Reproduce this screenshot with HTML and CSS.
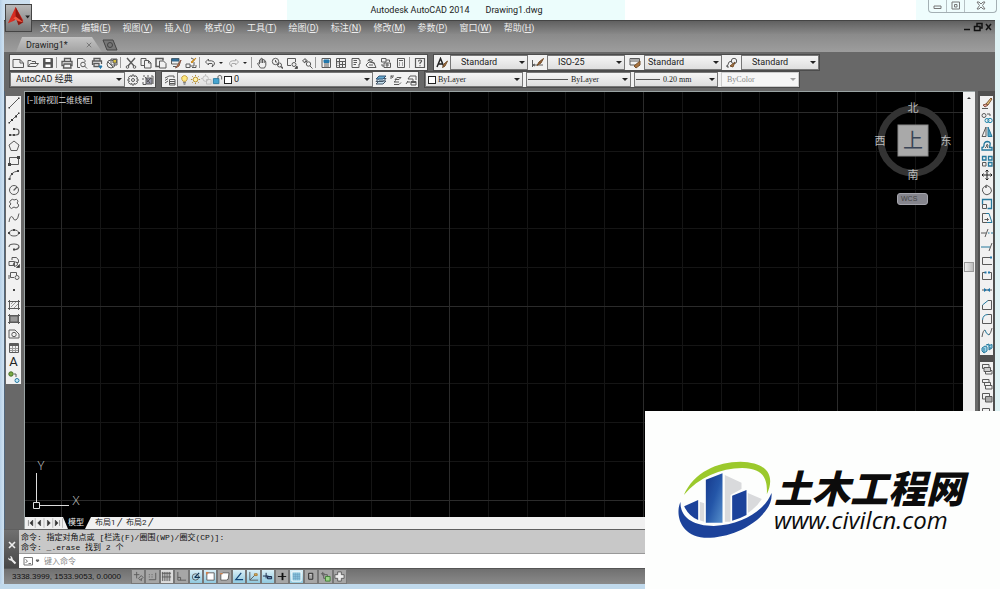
FILE: index.html
```html
<!DOCTYPE html>
<html lang="zh-CN">
<head>
<meta charset="utf-8">
<title>Autodesk AutoCAD 2014 - Drawing1.dwg</title>
<link rel="stylesheet" href="styles.css">
</head>
<body>
<svg class="defs" aria-hidden="true">
  <symbol id="new" viewBox="0 0 12 12"><path d="M1 2.500H8L11.500 6V10.500H1ZM8 2.500V6H11"/></symbol>
  <symbol id="open" viewBox="0 0 12 12"><path d="M1 9.500V3.500H4L5 4.500H8.500V6M1 9.500L3.500 6.500H11.500L9 9.500Z"/></symbol>
  <symbol id="save" viewBox="0 0 12 12"><path d="M1.500 1.500H10.500V10.500H1.500Z" fill="#555"/><path d="M3.500 2H8.500V5H3.500ZM3.500 7.500H8.500V10H3.500Z" fill="#fff" stroke="none"/></symbol>
  <symbol id="print" viewBox="0 0 12 12"><path d="M3.500 4V1.500H9.500V4M2.500 8.500H1V4.500H11V8.500H9.500M3 7H9.500L10 11H2.500Z" stroke-width="1.300"/></symbol>
  <symbol id="preview" viewBox="0 0 12 12"><path d="M4 10.500H1.500V1.500H7L9 3.500V5M8.500 9L11 11.500"/><circle cx="7" cy="7.500" r="2.300"/></symbol>
  <symbol id="publish" viewBox="0 0 12 12"><path d="M3 3.500V1.500H9V3.500M1.500 8V4H10.500V7M3 6.500H8V9.500H3Z" stroke-width="1.300"/><path d="M8 9H11L9.500 11.500Z" fill="#27a" stroke="#27a"/></symbol>
  <symbol id="print3d" viewBox="0 0 12 12"><circle cx="5" cy="7" r="4"/><path d="M5 2H11V8H5ZM2 5L7 10"/><path d="M7 2.500H10.500V6H7Z" fill="#d7bd39"/></symbol>
  <symbol id="cut" viewBox="0 0 12 12"><path d="M2 1L9 9M10 1L3 9" stroke-width="1.400"/><circle cx="2.500" cy="10" r="1.300"/><circle cx="9.500" cy="10" r="1.300"/></symbol>
  <symbol id="copy" viewBox="0 0 12 12"><path d="M4 8.500H1V1.500H6V3.500M4.500 3.500H8.500L11 6V11H4.500ZM8.500 3.500V6H11"/></symbol>
  <symbol id="paste" viewBox="0 0 12 12"><path d="M4 9.500H1V1.500H8V3.500M3 1.500H6.500" stroke-width="1.500"/><path d="M4.500 4H8.500L11 6.500V11H4.500Z"/></symbol>
  <symbol id="match" viewBox="0 0 12 12"><path d="M1.500 1.500H9V7H1.500ZM2 3.500H9M3 9.500H6"/><path d="M2 2H8.500V4H2Z" fill="#37a" stroke="#368"/><path d="M11 3L7 9L5.500 11L9 9Z" fill="#c48a48" stroke="#854"/></symbol>
  <symbol id="block" viewBox="0 0 12 12"><path d="M1 7H5V10.500H1ZM5 9H9V5M7 10.500H11V8M6 1L10 3"/><path d="M11 1L6 5L7 6Z" fill="#d79c28" stroke="#c88a22"/></symbol>
  <symbol id="undo" viewBox="0 0 12 12"><path d="M4.500 2L1.500 5L4.500 8V6.500H8Q9.500 7 8 10Q12 7 9.500 4.500Q8 3.500 4.500 3.800Z"/></symbol>
  <symbol id="pan" viewBox="0 0 12 12"><path d="M3.500 7V3Q4.500 1.500 5 3V1.500Q6 .500 6.500 2V3Q7.500 1 8.200 3V4Q9.500 3 9.800 5Q10.500 8.500 8.500 11H4.500Q3 9 1.500 6.500Q2 5 3.500 7M5 3V6M6.500 3V6M8.200 4V6"/></symbol>
  <symbol id="zoomrt" viewBox="0 0 12 12"><circle cx="4.500" cy="4.500" r="3.200"/><path d="M4.500 3V5H6M7 7L8 8"/><circle cx="8.500" cy="8" r="2"/><path d="M10 9.500L12 11.500" stroke-width="1.600"/></symbol>
  <symbol id="zoomwin" viewBox="0 0 12 12"><path d="M5 8.500H1.500V1.500H9.500V5M10 9L11.500 11" /><circle cx="8" cy="7.500" r="2"/><path d="M11 9L11.500 11.500H9Z" fill="#333"/></symbol>
  <symbol id="zoomprev" viewBox="0 0 12 12"><path d="M4 1.500L1.500 4L4 6V4.500H6V3H4ZM9 9L11.500 11.500"/><circle cx="7.500" cy="7" r="2.200"/></symbol>
  <symbol id="props" viewBox="0 0 12 12"><path d="M2 1.500H10.500V10.500H2ZM4 7H9M4 9H9"/><path d="M4 3H9V5.500H4Z" fill="#27a" stroke="#27a"/></symbol>
  <symbol id="center" viewBox="0 0 12 12"><path d="M1.500 1.500H10.500V10.500H1.500ZM1.500 4.500H10.500M4.500 1.500V10.500M7.500 4.500V10.500M4.500 7.500H10.500"/><path d="M2.500 6H3.500M2.500 8.500H3.500"/></symbol>
  <symbol id="sheet" viewBox="0 0 12 12"><path d="M2 1.500H9V3H10V7H9V10.500H2ZM3.500 3.500H7M3.500 5.500H7M3.500 7.500H6"/></symbol>
  <symbol id="markup" viewBox="0 0 12 12"><path d="M1 8L4 5L9 6L11 10.500H3ZM3 3L10 6.500M4 8H8M2.500 4L5 2L8 4"/></symbol>
  <symbol id="batch" viewBox="0 0 12 12"><path d="M1.500 1.500H6V5H1.500ZM6 3H9.500V5M4 6H10.500V10.500H4ZM2 7V9H4M5.500 8H9M7 6V10"/></symbol>
  <symbol id="calc" viewBox="0 0 12 12"><path d="M2.500 1.500H9.500V10.500H2.500ZM4 3.500H8M4 6H5M7 6H8M4 8H5M7 8H8"/></symbol>
  <symbol id="help" viewBox="0 0 12 12"><path d="M1.500 1.500H10.500V10.500H1.500ZM4.500 4.500Q4.500 3 6 3Q8 3 7.500 4.500L6 6V7M6 8.200V9.200" stroke-width="1.200"/></symbol>
  <symbol id="brushA" viewBox="0 0 12 12"><path d="M1 10L4.500 1.500L8 10M2 7H7" stroke="#222" stroke-width="1.500"/><path d="M11.500 4L9 9L6.500 10.500L8 7Z" fill="#a97440" stroke="#75502c"/></symbol>
  <symbol id="dim" viewBox="0 0 12 12"><path d="M.500 3V10M.500 8H11M1 8L3 7M1 8L3 9"/><path d="M11.500 1.500L9 6L5 8.500L7 5Z" fill="#98633d" stroke="#75502c"/></symbol>
  <symbol id="tblstyle" viewBox="0 0 12 12"><path d="M1 1.500H10.500V8H1ZM1 4H10"/><path d="M1.500 2H10V4H1.500Z" fill="#aaa" stroke="none"/><path d="M11 4V8L7 11L5 9Z" fill="#a97440" stroke="#75502c"/></symbol>
  <symbol id="leader" viewBox="0 0 12 12"><path d="M1 10L3 5L6 4M3 10L1 10V8"/><circle cx="8" cy="4" r="2.700"/><path d="M9 5L7 10L4 9Z" fill="#a97440" stroke="#75502c"/></symbol>
  <symbol id="gear" viewBox="0 0 12 12"><path d="M5 1H7V2.500L9 1.800L10.500 4L9.500 5H11V7H9.500L10.500 8.500L9 10.200L7 9.500V11H5V9.500L3 10.200L1.500 8.500L2.500 7H1V5H2.500L1.500 3.500L3 1.800L5 2.500Z"/><circle cx="6" cy="6" r="1.500"/></symbol>
  <symbol id="wsave" viewBox="0 0 12 12"><path d="M1 2H3M5 2H7M9 2H11V10M1 4V6M1 8V10.500H4"/><path d="M4 4H10V10H4Z" fill="#99a" /><path d="M3 3L8 9M5 8L9 4" stroke="#555"/></symbol>
  <symbol id="layers" viewBox="0 0 12 12"><path d="M1 4L5 2H10V4M1 6.500L4 4.500M1 9L4 7M5.500 5.500H11V11H5.500ZM6 7.500H11M6 9.500H11"/></symbol>
  <symbol id="bulb" viewBox="0 0 9 12"><path d="M3 8Q1 6 1.500 3.500Q4.500 0 7.500 3.500Q8 6 6 8Z" fill="#ffe87d" stroke="#bd963b"/><path d="M3 9.500H6M3.500 11H5.500"/></symbol>
  <symbol id="sun" viewBox="0 0 12 12"><circle cx="6" cy="6" r="2.500" fill="#fff3aa" stroke="#b98e28"/><path d="M6 1V2.500M6 9.500V11M1 6H2.500M9.500 6H11M2.500 2.500L3.500 3.500M8.500 8.500L9.500 9.500M9.500 2.500L8.500 3.500M2.500 9.500L3.500 8.500" stroke="#a8832e"/></symbol>
  <symbol id="freeze" viewBox="0 0 12 12"><g stroke="#bbb"><circle cx="5" cy="5" r="3"/><path d="M6 6H11V11H6ZM5 0V2M0 5H2"/></g></symbol>
  <symbol id="lock" viewBox="0 0 12 12"><path d="M1.500 5H7.500V10.500H1.500Z" fill="#45a4d0" stroke="#277aa0"/><path d="M6.500 5V2.500Q8.500 .500 10.500 2.500V6"/></symbol>
  <symbol id="stackblue" viewBox="0 0 12 12"><path d="M1 10L4 7H11L8 10ZM1 7.500L4 4.500H11L8 7.500Z" fill="#c5dfec" stroke="#456"/><path d="M1 5L4 2H11L8 5Z" fill="#64a9cf" stroke="#357"/></symbol>
  <symbol id="layprev" viewBox="0 0 12 12"><path d="M5 5.500L7 3.500H11L9 5.500ZM4 8L6 6.500M9 8H4M4 10.500H9L11 8.500M1 1.500L3 4M4 2H1V5"/></symbol>
  <symbol id="laystate" viewBox="0 0 12 12"><path d="M1 10L3 7M3 5H8V7M5 2H11V6M5 2L3 5M2 8H5M6 7.500H11V11H6Z"/><path d="M6 8H11" stroke-width="2"/></symbol>
  <symbol id="line" viewBox="0 0 12 12"><path d="M1 11L11 1"/><path d="M.500 10H2V11.500H.500ZM10 .500H11.500V2H10Z" fill="#333" stroke="none"/></symbol>
  <symbol id="xline" viewBox="0 0 12 12"><path d="M1 11L11 1"/><path d="M3 7H5V9H3ZM7 3.500H9V5.500H7ZM10 .500H11.500V2H10ZM.500 10H2V11.500H.500Z" fill="#333" stroke="none"/></symbol>
  <symbol id="pline" viewBox="0 0 12 12"><path d="M6 3H8Q11 3 11 6Q11 9 8 9H1.500" stroke-width="1.200"/><path d="M5 2H7V4H5ZM1 8H3V10H1ZM5 8H7V10H5Z" fill="#444" stroke="none"/></symbol>
  <symbol id="poly" viewBox="0 0 12 12"><path d="M6 1L11 5L9 10.500H3L1 5Z"/></symbol>
  <symbol id="rect" viewBox="0 0 12 12"><path d="M1.500 2.500H10.500V9.500H1.500Z" /><path d="M0 8H3V11H0ZM9 1H12V4H9Z" fill="#444" stroke="none"/></symbol>
  <symbol id="arc" viewBox="0 0 12 12"><path d="M1.500 11Q2 3 10 2"/><path d="M.500 9H2.500V11H.500ZM3 4H5V6H3ZM9 1H11V3H9Z" fill="#444" stroke="none"/></symbol>
  <symbol id="circle" viewBox="0 0 12 12"><circle cx="6" cy="6" r="4.500"/><path d="M6 6L9 3M5.500 6H6.500" stroke-width="1.300"/></symbol>
  <symbol id="cloud" viewBox="0 0 12 12"><path d="M3 2Q5 .500 6 2Q9 0 10 3Q10 4 9 5Q12 7 10 9Q8 11 6 9Q3 12 1.500 9Q1 7 3 6Q0 4 3 2Z"/></symbol>
  <symbol id="spline" viewBox="0 0 12 12"><path d="M1 10Q2 3 4.500 5Q6 9 8 8Q10 7 11 1.500"/></symbol>
  <symbol id="ellipse" viewBox="0 0 12 12"><ellipse cx="6" cy="6" rx="4.500" ry="3"/><path d="M0 5H2V7H0ZM10 5H12V7H10ZM5 2H7V4H5Z" fill="#444" stroke="none"/></symbol>
  <symbol id="earc" viewBox="0 0 12 12"><path d="M1 6Q1 3 6 3Q11 3 11 6Q10 9 6 8.500" stroke-width="1.200"/><path d="M5 7.500H7V9.500H5Z" fill="#444" stroke="none"/></symbol>
  <symbol id="insblock" viewBox="0 0 12 12"><path d="M4 4V1.500H8.500L10.500 4V6.500H8M1 5.500H6.500V9.500H1ZM5 8L7 11"/><circle cx="7.500" cy="8" r="2"/><path d="M11.500 8.500V11.500H8.500Z" fill="#333"/></symbol>
  <symbol id="mkblock" viewBox="0 0 12 12"><path d="M2.500 2.500H8.500V5M2.500 2.500V7.500H6M1 5V9"/><circle cx="9" cy="7.500" r="2"/></symbol>
  <symbol id="point" viewBox="0 0 12 12"><path d="M5 5H7V7H5Z" fill="#444" stroke="none"/></symbol>
  <symbol id="hatch" viewBox="0 0 12 12"><path d="M1.500 1V11M10.500 1V11M0 2.500H12M0 9.500H12" /><path d="M3 8L8 3M3 5L5 3M6 9L10 5" stroke="#999"/></symbol>
  <symbol id="grad" viewBox="0 0 12 12"><path d="M2 3H10V9H2Z" fill="#999"/><path d="M1.500 1V11M10.500 1V11M0 2.500H12M0 9.500H12"/></symbol>
  <symbol id="region" viewBox="0 0 12 12"><path d="M1 2H7L11 6V10H1Z"/><circle cx="6" cy="6.500" r="2.200"/></symbol>
  <symbol id="table" viewBox="0 0 12 12"><path d="M1.500 1.500H10.500V10.500H1.500Z"/><path d="M2 6.500H10M4.500 4V10M7.500 4V10M2 8.500H10" stroke="#999"/><path d="M1 3H11" stroke-width="2"/></symbol>
  <symbol id="addsel" viewBox="0 0 12 12"><circle cx="3" cy="3" r="2.200" fill="#7cab45" stroke="#476f29"/><circle cx="9" cy="9.500" r="2" fill="#c4e6f5" stroke="#257ba3"/><path d="M6 3H8V6"/></symbol>
  <symbol id="erase" viewBox="0 0 12 12"><path d="M5 7L10 1L11 2L7 8Z" fill="#e7c477" stroke="#7b5535"/><path d="M2 8L5 7L7 8L4 10Z" fill="#e6a8a0" stroke="#86543e"/><path d="M1 11.500H7"/></symbol>
  <symbol id="copyobj" viewBox="0 0 12 12"><circle cx="3" cy="3.500" r="2"/><path d="M6 2H9V4"/><g stroke="#2386aa"><circle cx="6" cy="8.500" r="2"/><circle cx="9" cy="8.500" r="2.200"/></g></symbol>
  <symbol id="mirror" viewBox="0 0 12 12"><path d="M5 1V10.500H1Z"/><path d="M7 1V10.500H11Z" fill="#56aac9" stroke="#24789c"/></symbol>
  <symbol id="offset" viewBox="0 0 12 12"><path d="M1 10V7.500Q3 7.500 3 5Q3 1.500 6.500 1.500Q10 2 9 5L8.500 7.500H11V10Z" stroke="#24789c" stroke-width="1.300"/><path d="M4 8Q6 7 5.500 5Q6 3.500 7 5L6.500 8"/></symbol>
  <symbol id="array" viewBox="0 0 12 12"><g stroke="#24789c" stroke-width="1.300"><path d="M1.500 1.500H5V5H1.500ZM7.500 1.500H11V5H7.500ZM7.500 7.500H11V11H7.500Z"/></g><path d="M1.500 7.500H5V11H1.500Z"/></symbol>
  <symbol id="move" viewBox="0 0 12 12"><path d="M6 1V11M1 6H11M4.500 2.500L6 1L7.500 2.500M4.500 9.500L6 11L7.500 9.500M2.500 4.500L1 6L2.500 7.500M9.500 4.500L11 6L9.500 7.500" stroke="#222"/></symbol>
  <symbol id="rotate" viewBox="0 0 12 12"><path d="M5 2Q1 3 1.500 7Q3 11 6 10.800Q10 10 10.500 7Q10.500 3 7 2L5 1V4Z"/></symbol>
  <symbol id="scale" viewBox="0 0 12 12"><path d="M1.500 6.500V1.500H10.500V10.500H6.500" stroke="#24789c" stroke-width="1.300"/><path d="M1.500 6.500H5.500V10.500H1.500Z"/></symbol>
  <symbol id="stretch" viewBox="0 0 12 12"><path d="M6 1.500H1.500V10.500H6"/><path d="M5 1.500H8L11 10.500H6" stroke="#24789c"/><path d="M3.500 7.500H7.500M6 6L7.500 7.500L6 9"/></symbol>
  <symbol id="trim" viewBox="0 0 12 12"><path d="M0 6H5M4 10L7 2"/><path d="M7 6H8.500M10 6H12" stroke="#24789c"/></symbol>
  <symbol id="extend" viewBox="0 0 12 12"><path d="M8 10L11 2"/><path d="M0 6H9" stroke="#24789c"/></symbol>
  <symbol id="brkpt" viewBox="0 0 12 12"><path d="M1.500 2.500H10M1.500 2.500V9.500H11"/><path d="M9 1.500H11V3.500H9Z" fill="#27a" stroke="none"/></symbol>
  <symbol id="brk" viewBox="0 0 12 12"><path d="M4 2.500H1.500V9.500H10.500V2.500H8"/><path d="M3.500 1.500H5.500V3.500H3.500ZM7 1.500H9V3.500H7Z" fill="#27a" stroke="none"/></symbol>
  <symbol id="join" viewBox="0 0 12 12"><path d="M1 6H11"/><path d="M3 4L6 6L3 8ZM9 4L6 6L9 8Z" fill="#27a" stroke="none"/></symbol>
  <symbol id="chamfer" viewBox="0 0 12 12"><path d="M1.500 6V10.500H10.500V1.500H7"/><path d="M1.500 6L7 1.500" stroke="#24789c"/></symbol>
  <symbol id="fillet" viewBox="0 0 12 12"><path d="M1.500 7V10.500H10.500V1.500H7"/><path d="M1.500 7Q2 1.500 7 1.500" stroke="#24789c"/></symbol>
  <symbol id="blend" viewBox="0 0 12 12"><path d="M1 10Q2 3 4 3M8 8Q10 6 11 1"/><path d="M4 3Q5 7 8 8" stroke="#24789c"/></symbol>
  <symbol id="explode" viewBox="0 0 12 12"><path d="M1 6L4 4L6 5V9L3 11L1 9ZM5 3L8 2V5M8 3.500L11 2.500V6L8 8V5" fill="#9bd2e8" stroke="#24789c"/><path d="M3 6V10M9 5V7" stroke="#24789c"/></symbol>
  <symbol id="order1" viewBox="0 0 12 12"><path d="M1.500 1.500H8V5.500H1.500ZM4.500 7.500H11V11H4.500Z"/><path d="M3 4.500H9.500V8.500H3Z" fill="#ccc"/></symbol>
  <symbol id="order2" viewBox="0 0 12 12"><path d="M1.500 1.500H8V4.500H1.500ZM4.500 7.500H11V11H4.500ZM3.500 4.500V7.500H9.500V4.500H8"/></symbol>
  <symbol id="order3" viewBox="0 0 12 12"><path d="M1.500 1.500H8.500V7H1.500Z"/><path d="M4.500 4.500H11V10H4.500Z" fill="#aaa"/></symbol>
  <symbol id="infer" viewBox="0 0 12 12"><path d="M4 1V8M1 4H7M6 8L9 5L11 7L8 10ZM9 8V11"/></symbol>
  <symbol id="snap" viewBox="0 0 12 12"><path d="M2 9.500H9.500V2M2 4H3M5 4H6M2 6.500H3M5 6.500H6"/></symbol>
  <symbol id="grid" viewBox="0 0 12 12"><path d="M1.500 1V11M3.500 1V11M5.500 1V11M7.500 1V11M9.500 1V11M1 2.500H11M1 6.500H11"/></symbol>
  <symbol id="ortho" viewBox="0 0 12 12"><path d="M2 1V10H11M2 7H5V10"/></symbol>
  <symbol id="polar" viewBox="0 0 12 12"><circle cx="6" cy="6.500" r="3.500"/><path d="M5 7L10 2M5 7H11" stroke="#135" stroke-width="1.300"/></symbol>
  <symbol id="osnap" viewBox="0 0 12 12"><path d="M2 2H10V10H2Z" fill="#fff"/><path d="M2 1V4M1 2H4" stroke="#e27932"/></symbol>
  <symbol id="osnap3" viewBox="0 0 12 12"><path d="M2 4L4 2H11L10 9L8 10H2Z" fill="#fff"/><path d="M1 3H4" stroke="#e27932"/></symbol>
  <symbol id="otrack" viewBox="0 0 12 12"><path d="M9 2L3 9.500H11" stroke="#147" stroke-width="1.300"/></symbol>
  <symbol id="ducs" viewBox="0 0 12 12"><path d="M2 1V10H11M2 10L8 4"/><path d="M7 3H10V5H7Z" fill="#e0b75f" stroke="#a37a38"/></symbol>
  <symbol id="dyn" viewBox="0 0 12 12"><path d="M4.500 2V8M1 5.500H7" stroke="#124"/><path d="M6 6H10.500V8.500H6Z" fill="#68a" stroke="#124"/></symbol>
  <symbol id="lwt" viewBox="0 0 12 12"><path d="M1 6H10" stroke="#111"/><path d="M6 2V10" stroke="#111" stroke-width="2"/></symbol>
  <symbol id="tpy" viewBox="0 0 12 12"><path d="M1 1H11V11H1Z" fill="#8ec9e0" stroke="#fff"/><path d="M3 2V10M5 2V10M7 2V10M9 2V10M2 4H10M2 6H10M2 8H10" stroke="#6296b8" stroke-width=".500"/></symbol>
  <symbol id="qp" viewBox="0 0 12 12"><path d="M4 2.500H8.500V9H4Z" stroke="#222"/><path d="M5 4H7" stroke="#ddd"/></symbol>
  <symbol id="sc" viewBox="0 0 12 12"><path d="M3 1V5M1 3H5M4 4H8V8H4Z"/><path d="M6 6H11V11H6Z" fill="#9bd487" stroke="#3f7e34"/></symbol>
  <symbol id="am" viewBox="0 0 12 12"><path d="M4 1H8V4H11V8H8V11H4V8H1V4H4Z" fill="#eee"/></symbol>
</svg>

<div class="app">
  <button class="appmenu" aria-label="应用程序菜单">
    <svg viewBox="0 0 26 27"><path d="M10 2L2 19L9 16L12 10L15 18L18 16Z" fill="#d52c21"/><path d="M10 2L18 18L13 21L10 13Z" fill="#8f1710"/><path d="M2 19L10 12L18 18L13 17L8 14Z" fill="#ef5a42"/><path d="M20 11H25L22.500 14Z" fill="#222"/></svg>
  </button>
  <header class="title">
    <h1>Autodesk AutoCAD 2014<span>Drawing1.dwg</span></h1>
    <div class="winbtns">
      <button aria-label="最小化"><svg viewBox="0 0 12 12"><path d="M2 6H9V8.500H2Z"/></svg></button>
      <button aria-label="最大化"><svg viewBox="0 0 12 12"><path d="M2 2H9.500V9H2ZM4.500 4.500H7V7H4.500Z"/></svg></button>
      <button class="wide" aria-label="关闭"><svg viewBox="0 0 12 12"><path d="M2 2H4L6 4L8 2H10L7.500 5.500L10 9H8L6 7L4 9H2L4.500 5.500Z"/></svg></button>
    </div>
  </header>
  <nav class="menu">
    <a href="#">文件(<u>F</u>)</a><a href="#">编辑(<u>E</u>)</a><a href="#">视图(<u>V</u>)</a><a href="#">插入(<u>I</u>)</a><a href="#">格式(<u>O</u>)</a><a href="#">工具(<u>T</u>)</a><a href="#">绘图(<u>D</u>)</a><a href="#">标注(<u>N</u>)</a><a href="#">修改(<u>M</u>)</a><a href="#">参数(<u>P</u>)</a><a href="#">窗口(<u>W</u>)</a><a href="#">帮助(<u>H</u>)</a>
    <svg class="docbtns" viewBox="0 0 30 12"><path d="M1 8.500H7M11.500 5.500H17V9.500H11.500ZM14 5V2.500H19V7H17M23 3L28 9M28 3L23 9"/></svg>
  </nav>
  <div class="filetabs">
    <div class="filetab"><a href="#">Drawing1*</a><button aria-label="关闭图形"><svg viewBox="0 0 8 8"><path d="M1 1L7 7M7 1L1 7"/></svg></button></div>
    <button class="newtab" aria-label="新图形"><svg viewBox="0 0 16 12"><path d="M1 1H11L15 11H5Z" fill="#777" stroke="#444"/><circle cx="8" cy="6" r="2.500" stroke="#444"/></svg></button>
  </div>

  <div class="bars">
    <div class="bar">
      <div class="panel">
        <button class="t" aria-label="新建"><svg><use href="#new"/></svg></button><button class="t" aria-label="打开"><svg><use href="#open"/></svg></button><button class="t" aria-label="保存"><svg><use href="#save"/></svg></button><i></i><button class="t" aria-label="打印"><svg><use href="#print"/></svg></button><button class="t" aria-label="打印预览"><svg><use href="#preview"/></svg></button><button class="t" aria-label="发布"><svg><use href="#publish"/></svg></button><button class="t" aria-label="三维打印"><svg><use href="#print3d"/></svg></button><i></i><button class="t" aria-label="剪切"><svg><use href="#cut"/></svg></button><button class="t" aria-label="复制"><svg><use href="#copy"/></svg></button><button class="t" aria-label="粘贴"><svg><use href="#paste"/></svg></button><button class="t" aria-label="特性匹配"><svg><use href="#match"/></svg></button><button class="t" aria-label="块编辑器"><svg><use href="#block"/></svg></button><i></i><button class="t" aria-label="放弃"><svg><use href="#undo"/></svg></button><button class="drop" aria-label="放弃列表"></button><button class="t redo" aria-label="重做"><svg><use href="#undo"/></svg></button><button class="drop" aria-label="重做列表"></button><i></i><button class="t" aria-label="平移"><svg><use href="#pan"/></svg></button><button class="t" aria-label="实时缩放"><svg><use href="#zoomrt"/></svg></button><button class="t" aria-label="窗口缩放"><svg><use href="#zoomwin"/></svg></button><button class="t" aria-label="缩放上一个"><svg><use href="#zoomprev"/></svg></button><i></i><button class="t" aria-label="特性"><svg><use href="#props"/></svg></button><button class="t" aria-label="设计中心"><svg><use href="#center"/></svg></button><button class="t" aria-label="工具选项板"><svg><use href="#sheet"/></svg></button><button class="t" aria-label="图纸集"><svg><use href="#markup"/></svg></button><button class="t" aria-label="标记集"><svg><use href="#batch"/></svg></button><button class="t" aria-label="计算器"><svg><use href="#calc"/></svg></button><i></i><button class="t" aria-label="帮助"><svg><use href="#help"/></svg></button>
      </div>
      <div class="panel styles">
        <button class="t" aria-label="文字样式"><svg><use href="#brushA"/></svg></button>
        <div class="pick in"><select aria-label="文字样式列表"><option>Standard</option></select></div>
        <button class="t" aria-label="标注样式"><svg><use href="#dim"/></svg></button>
        <div class="pick in"><select aria-label="标注样式列表"><option>ISO-25</option></select></div>
        <button class="t" aria-label="表格样式"><svg><use href="#tblstyle"/></svg></button>
        <div class="pick"><select aria-label="表格样式列表"><option>Standard</option></select></div>
        <button class="t" aria-label="多重引线样式"><svg><use href="#leader"/></svg></button>
        <div class="pick in"><select aria-label="多重引线样式列表"><option>Standard</option></select></div>
      </div>
    </div>
    <div class="bar">
      <div class="panel">
        <div class="pick ws"><select aria-label="工作空间"><option>AutoCAD 经典</option></select></div>
        <button class="t" aria-label="工作空间设置"><svg><use href="#gear"/></svg></button><button class="t" aria-label="我的工作空间"><svg><use href="#wsave"/></svg></button>
      </div>
      <div class="panel">
        <button class="t" aria-label="图层特性"><svg><use href="#layers"/></svg></button>
        <div class="pick layer"><svg><use href="#bulb"/></svg><svg><use href="#sun"/></svg><svg><use href="#freeze"/></svg><svg><use href="#lock"/></svg><b class="swatch"></b><select aria-label="图层"><option>0</option></select></div>
        <button class="t" aria-label="置为当前"><svg><use href="#stackblue"/></svg></button><button class="t" aria-label="上一个图层"><svg><use href="#layprev"/></svg></button><button class="t" aria-label="图层状态"><svg><use href="#laystate"/></svg></button>
      </div>
      <div class="panel props">
        <div class="pick c1"><b class="swatch"></b><select aria-label="颜色"><option>ByLayer</option></select></div>
        <div class="pick c2"><b class="rule"></b><select aria-label="线型"><option>ByLayer</option></select></div>
        <div class="pick c3"><b class="rule short"></b><select aria-label="线宽"><option>0.20 mm</option></select></div>
        <div class="pick c4"><select aria-label="打印样式" disabled><option>ByColor</option></select></div>
      </div>
    </div>
  </div>

  <main class="work">
    <aside class="side left">
      <div class="tools draw">
        <button class="t" aria-label="直线"><svg><use href="#line"/></svg></button><button class="t" aria-label="构造线"><svg><use href="#xline"/></svg></button><button class="t" aria-label="多段线"><svg><use href="#pline"/></svg></button><button class="t" aria-label="多边形"><svg><use href="#poly"/></svg></button><button class="t" aria-label="矩形"><svg><use href="#rect"/></svg></button><button class="t" aria-label="圆弧"><svg><use href="#arc"/></svg></button><button class="t" aria-label="圆"><svg><use href="#circle"/></svg></button><button class="t" aria-label="修订云线"><svg><use href="#cloud"/></svg></button><button class="t" aria-label="样条曲线"><svg><use href="#spline"/></svg></button><button class="t" aria-label="椭圆"><svg><use href="#ellipse"/></svg></button><button class="t" aria-label="椭圆弧"><svg><use href="#earc"/></svg></button><button class="t" aria-label="插入块"><svg><use href="#insblock"/></svg></button><button class="t" aria-label="创建块"><svg><use href="#mkblock"/></svg></button><button class="t" aria-label="点"><svg><use href="#point"/></svg></button><button class="t" aria-label="图案填充"><svg><use href="#hatch"/></svg></button><button class="t" aria-label="渐变色"><svg><use href="#grad"/></svg></button><button class="t" aria-label="面域"><svg><use href="#region"/></svg></button><button class="t" aria-label="表格"><svg><use href="#table"/></svg></button><button class="t mtext" aria-label="多行文字">A</button><button class="t" aria-label="添加选定对象"><svg><use href="#addsel"/></svg></button>
      </div>
    </aside>
    <section class="drawing">
      <div class="viewrow">
        <div class="canvas">
          <svg class="gridlines" aria-hidden="true">
            <defs><pattern id="gp" x="36" y="20" width="194" height="194" patternUnits="userSpaceOnUse"><path d="M39.500 0V194M78.500 0V194M116.500 0V194M155.500 0V194M0 39.500H194M0 77.500H194M0 116.500H194M0 155.500H194" stroke="#151515"/><path d="M.500 0V194M0 .500H194" stroke="#2b2b2b"/></pattern></defs>
            <rect width="100%" height="100%" fill="url(#gp)"/>
          </svg>
          <p class="vplabel">[−][俯视][二维线框]</p>
          <svg class="cube" viewBox="0 0 80 84">
            <circle cx="40" cy="42" r="32" fill="none" stroke="#333" stroke-width="7"/>
            <rect x="25" y="26" width="30" height="31" fill="#a9a9a9" stroke="#8a8a8a"/>
            <text x="40" y="49" font-size="20" fill="#394456">上</text>
            <g font-size="11" fill="#bcbcbc"><text x="40" y="13">北</text><text x="40" y="80">南</text><text x="7" y="46">西</text><text x="73" y="46">东</text></g>
          </svg>
          <button class="wcs">WCS</button>
          <svg class="ucs" viewBox="0 0 52 60"><path d="M4.500 49V20M7 52.500H37M1.500 49.500H7.500V55.500H1.500Z" fill="none" stroke="#ddd"/><text x="9" y="17">Y</text><text x="44" y="52">X</text></svg>
        </div>
        <div class="vscroll"><b></b><i></i></div>
      </div>
      <div class="layouts">
        <svg class="pager" viewBox="0 0 39 12"><path d="M3.500 3V9M8 3L5 6L8 9ZM16 3L13 6L16 9ZM23 3L26 6L23 9ZM31 3L34 6L31 9ZM35.500 3V9" fill="#333" stroke="#333" stroke-width=".500"/><path d="M10.500 1V11M19.500 1V11M28.500 1V11M38.500 1V11" stroke="#bbb"/></svg>
        <a href="#" class="on">模型</a><a href="#">布局1</a><em>/</em><a href="#">布局2</a><em>/</em>
      </div>
    </section>
    <aside class="side right">
      <div class="tools modify">
        <button class="t" aria-label="删除"><svg><use href="#erase"/></svg></button><button class="t" aria-label="复制对象"><svg><use href="#copyobj"/></svg></button><button class="t" aria-label="镜像"><svg><use href="#mirror"/></svg></button><button class="t" aria-label="偏移"><svg><use href="#offset"/></svg></button><button class="t" aria-label="阵列"><svg><use href="#array"/></svg></button><button class="t" aria-label="移动"><svg><use href="#move"/></svg></button><button class="t" aria-label="旋转"><svg><use href="#rotate"/></svg></button><button class="t" aria-label="缩放"><svg><use href="#scale"/></svg></button><button class="t" aria-label="拉伸"><svg><use href="#stretch"/></svg></button><button class="t" aria-label="修剪"><svg><use href="#trim"/></svg></button><button class="t" aria-label="延伸"><svg><use href="#extend"/></svg></button><button class="t" aria-label="打断于点"><svg><use href="#brkpt"/></svg></button><button class="t" aria-label="打断"><svg><use href="#brk"/></svg></button><button class="t" aria-label="合并"><svg><use href="#join"/></svg></button><button class="t" aria-label="倒角"><svg><use href="#chamfer"/></svg></button><button class="t" aria-label="圆角"><svg><use href="#fillet"/></svg></button><button class="t" aria-label="光顺曲线"><svg><use href="#blend"/></svg></button><button class="t" aria-label="分解"><svg><use href="#explode"/></svg></button>
      </div>
      <div class="tools order">
        <button class="t" aria-label="前置"><svg><use href="#order1"/></svg></button><button class="t" aria-label="后置"><svg><use href="#order2"/></svg></button><button class="t" aria-label="置于对象之上"><svg><use href="#order3"/></svg></button><button class="t" aria-label="置于对象之下"><svg><use href="#order3"/></svg></button>
      </div>
    </aside>
  </main>

  <section class="command">
    <div class="grip">
      <button aria-label="关闭命令行"><svg viewBox="0 0 10 10"><path d="M2 2L8 8M8 2L2 8" stroke="#eee" stroke-width="1.600"/></svg></button>
      <button aria-label="自定义"><svg viewBox="0 0 10 10"><path d="M4 4L8.500 8.500" stroke="#eee" stroke-width="2"/><path d="M1 2.500Q1 5 3.500 5.500Q6 5 5.500 3Q5 1 3 1L4 3L3 4Z" fill="#eee"/></svg></button>
    </div>
    <div class="cmdbody">
      <div class="log"><p>命令: 指定对角点或 [栏选(F)/圈围(WP)/圈交(CP)]:</p><p>命令: _.erase 找到 2 个</p></div>
      <label class="entry"><svg viewBox="0 0 17 10"><path d="M1 1.500H9.500V9H1ZM2.500 3.500L4.500 5L2.500 7M5.500 7.500H8" stroke="#777"/><path d="M13 4H16L14.500 6Z" fill="#777"/></svg><input type="text" placeholder="键入命令" aria-label="键入命令"></label>
    </div>
  </section>

  <footer class="status">
    <output>3338.3999, 1533.9053, 0.0000</output>
    <div class="modes">
      <button aria-label="推断约束"><svg><use href="#infer"/></svg></button><button aria-label="捕捉"><svg><use href="#snap"/></svg></button><button aria-label="栅格" class="lit"><svg><use href="#grid"/></svg></button><button aria-label="正交"><svg><use href="#ortho"/></svg></button><button aria-label="极轴" class="on"><svg><use href="#polar"/></svg></button><button aria-label="对象捕捉" class="on"><svg><use href="#osnap"/></svg></button><button aria-label="三维对象捕捉"><svg><use href="#osnap3"/></svg></button><button aria-label="对象追踪" class="on"><svg><use href="#otrack"/></svg></button><button aria-label="动态UCS" class="on"><svg><use href="#ducs"/></svg></button><button aria-label="动态输入" class="on"><svg><use href="#dyn"/></svg></button><button aria-label="线宽"><svg><use href="#lwt"/></svg></button><button aria-label="透明度" class="on"><svg><use href="#tpy"/></svg></button><button aria-label="快捷特性"><svg><use href="#qp"/></svg></button><button aria-label="选择循环"><svg><use href="#sc"/></svg></button><button aria-label="注释监视器"><svg><use href="#am"/></svg></button>
    </div>
  </footer>
</div>

<div class="brand">
  <svg viewBox="110 160 290 240" aria-hidden="true">
    <defs><linearGradient id="bg" x1="0" x2="1" y1="0" y2="1"><stop offset="0" stop-color="#16398c"/><stop offset=".5" stop-color="#2456a8"/><stop offset="1" stop-color="#5790cc"/></linearGradient></defs>
    <path d="M253 208L303 231V250L270 268V348H253ZM322 262L364 280Q350 303 322 322ZM178 288L191 293V348L178 344Z" fill="#d9dadc"/>
    <path d="M196 222L246 203V351H196Z" fill="url(#bg)"/>
    <path d="M131 302L173 283V343Q145 332 131 302ZM275 270L318 253V328Q298 339 275 345Z" fill="#1c429a"/>
    <path d="M130 268C160 200 230 168 300 168C375 170 407 205 379 266C382 215 365 188 305 187C240 188 175 215 130 268Z" fill="#9bc92c"/>
    <path d="M120 288C103 325 118 400 210 396C310 390 400 320 393 262C375 310 310 357 220 361C150 360 118 330 120 288Z" fill="#1c429a"/>
  </svg>
  <div><strong>土木工程网</strong><span>www.civilcn.com</span></div>
</div>
</body>
</html>
```
FILE: styles.css
```css
* { box-sizing: border-box; }
body { margin: 0; font-family: Roboto, "Noto Sans CJK SC", sans-serif; font-size: 9px; color: #222; background: #c4dcee; }
h1, p { margin: 0; font-weight: normal; }
button, select, input { font: inherit; color: inherit; border: 0; padding: 0; margin: 0; background: none; }
a { color: inherit; text-decoration: none; }
svg { fill: none; stroke: #5a5a5a; display: block; }
text { stroke: none; }
.defs { position: absolute; width: 0; height: 0; }

.app { position: relative; min-height: 100vh; display: flex; flex-direction: column; padding: 0 5px 0 4px; border-bottom: 5px solid #c0d9ec; background: linear-gradient(90deg, #b7d0e7, #cbdff0 3px, #eafafa 50%, #dff2f4); }
.title { height: 20px; display: grid; place-items: center; position: relative; margin: 0 -5px 0 -4px; background: linear-gradient(90deg, transparent 30px, #fff 30px 287px, #ecfdfc 287px 625px, #fff 625px 916px, #effdfd 916px); }
.title h1 { font-size: 9px; line-height: 18px; padding-right: 87px; color: #222; }
.title h1 span { margin-left: 16px; }
.winbtns { position: absolute; right: 3px; top: 0; display: flex; border: 1px solid #a4b0b4; border-top: 0; border-radius: 0 0 4px 4px; }
.winbtns button { width: 18px; height: 12px; display: grid; place-items: center; border-right: 1px solid #b6c1c4; }
.winbtns .wide { width: 31px; border: 0; }
.winbtns svg { width: 12px; height: 12px; stroke: #777; }
.appmenu { position: absolute; left: 5px; top: 4px; z-index: 2; width: 27px; height: 28px; background: linear-gradient(#b8b8b8, #777); border: 1px solid #444; }
.appmenu svg { width: 25px; height: 26px; stroke: none; }

.menu { display: flex; gap: 12px; height: 14px; padding: 0 2px 0 36px; line-height: 14px; color: #eee; background: linear-gradient(#606060, #888); border-top: 1px solid #444; white-space: nowrap; }
.menu a { min-width: 28px; }
.docbtns { width: 30px; height: 12px; margin-left: auto; stroke: #111; stroke-width: 1.500; }
.filetabs { display: flex; height: 18px; padding: 3px 0 0 12px; background: linear-gradient(#8a8a8a, #9d9d9d); }
.filetab { display: flex; align-items: center; width: 86px; padding: 0 10px; background: linear-gradient(#c4c4c4, #a2a2a2); clip-path: polygon(6px 0, 76px 0, 100% 100%, 0 100%); }
.filetab a { flex: 1; }
.filetab svg { width: 6px; height: 6px; stroke: #666; }
.newtab svg { width: 16px; height: 12px; }

.bars { display: flex; flex-direction: column; gap: 2px; padding: 3px 0 4px 6px; background: #686868; }
.bar { display: flex; gap: 7px; }
.panel { display: flex; align-items: stretch; height: 15px; background: #f1f1f1; box-shadow: 0 0 0 1px #4c4c4c; }
.t { width: 15px; display: grid; place-items: center; flex: none; }
.t svg { width: 12px; height: 12px; }
.panel i { width: 4px; margin: 2px 0; background: linear-gradient(90deg, transparent 1px, #999 1px 2px, transparent 2px); }
.redo svg { transform: scaleX(-1); stroke: #aaa; }
.drop { width: 9px; position: relative; }
.drop::after, .pick::after { content: ""; align-self: center; border: 3px solid transparent; border-top-color: #222; border-bottom: 0; }
.drop::after { position: absolute; left: 2px; top: 7px; border-width: 2px 2px 0; }
.pick { display: flex; align-items: center; width: 78px; padding: 0 2px 0 8px; background: linear-gradient(#f5f5f5, #dedede); border: 1px solid #777; }
.pick select { appearance: none; flex: 1; min-width: 0; height: 13px; line-height: 13px; outline: 0; opacity: 1; }
.pick svg { width: 11px; height: 11px; flex: none; }
.styles { gap: 1px; }
.styles .pick { padding-left: 3px; }
.styles .in { padding-left: 10px; }
.styles .t:not(:first-child) { width: 17px; }
.pick.ws { width: 115px; padding-left: 5px; }
.pick.layer { width: 196px; padding-left: 1px; }
.swatch { width: 8px; height: 8px; margin: 0 2px 0 1px; border: 1px solid #222; background: #fff; }
.rule { width: 40px; height: 1px; margin-right: 3px; background: #555; }
.rule.short { width: 24px; }
.props { gap: 3px; font-family: "Liberation Serif", serif; font-size: 8px; }
.props .pick { padding-left: 1px; }
.props .c1 { width: 98px; }
.props .c2 { width: 105px; }
.props .c3 { width: 84px; }
.props .c4 { width: 78px; padding-left: 5px; color: #888; background: #f6f6f6; border-color: #ccc; }
.c4::after { opacity: .4; }

.work { flex: 1; min-height: 0; display: flex; background: #686868; }
.side { flex: none; }
.side.left { width: 17px; padding: 5px 0 0 1px; border-left: 1px solid #52677c; }
.side.right { width: 17px; margin-left: 3px; padding: 5px 2px 0; background: #505050; }
.tools { display: grid; background: #f1f1f1; justify-content: center; }
.draw { height: 288px; grid-template-rows: repeat(20, 1fr); }
.modify { height: 259px; grid-template-rows: repeat(18, 1fr); }
.order { height: 58px; margin-top: 7px; grid-template-rows: repeat(4, 1fr); }
.mtext { font-size: 13px; line-height: 14px; }
.drawing { flex: 1; min-width: 0; display: flex; flex-direction: column; margin-left: 3px; border-left: 1px solid #9aa3a3; border-top: 1px solid #9aa3a3; }
.viewrow { flex: 1; display: flex; min-height: 0; }
.canvas { flex: 1; position: relative; background: #000; overflow: hidden; }
.gridlines { position: absolute; width: 100%; height: 100%; stroke: none; }
.vplabel { position: absolute; left: 2px; top: 3px; font-size: 8px; line-height: 12px; color: #ddd; }
.cube { position: absolute; right: 10px; top: 7px; width: 80px; height: 84px; text-anchor: middle; font-family: "Noto Sans CJK SC", sans-serif; stroke: none; }
.wcs { position: absolute; right: 35px; top: 101px; width: 31px; height: 12px; padding-left: 3px; text-align: left; font: 7px/10px "Liberation Sans", sans-serif; color: #444; background: #85858d; border: 1px solid #a5a5ad; border-radius: 3px; }
.ucs { position: absolute; left: 7px; bottom: 4px; width: 52px; height: 60px; text-anchor: middle; font: 300 13px "Open Sans", sans-serif; }
.ucs text { fill: #ccc; }
.vscroll { width: 12px; display: flex; flex-direction: column; align-items: center; padding-top: 5px; background: #f0f0f0; }
.vscroll b { border: 2px solid transparent; border-top: 0; border-bottom-color: #333; }
.vscroll i { width: 10px; height: 10px; margin-top: 163px; background: linear-gradient(90deg, #eee, #bbb); border: 1px solid #999; }
.layouts { display: flex; height: 12px; align-items: center; font-size: 8px; line-height: 12px; background: #f0f0f0; }
.layouts a { padding: 0 2px 0 4px; }
.layouts .on { width: 28px; padding: 0 0 0 5px; color: #eee; background: #000; clip-path: polygon(0 0, 100% 0, 22px 100%, 5px 100%); }
.layouts em { font-style: italic; font-size: 11px; }
.pager { width: 38px; height: 12px; }

.command { display: flex; border-top: 1px solid #606060; background: #c8c8c8; }
.grip { width: 15px; display: grid; align-content: end; justify-items: center; gap: 5px; padding-bottom: 3px; background: linear-gradient(#707070, #484848); }
.grip svg { width: 10px; height: 10px; stroke: none; }
.cmdbody { flex: 1; }
.log { padding: 3px 2px 0; font: 8px/10px "Liberation Mono", "Noto Sans CJK SC", monospace; color: #111; border-bottom: 1px solid #999; }
.entry { display: flex; gap: 4px; height: 14px; align-items: center; padding-left: 4px; background: #fff; }
.entry svg { width: 17px; height: 10px; }
.entry input { flex: 1; height: 14px; font-size: 8px; outline: 0; }
.entry input::placeholder { color: #888; opacity: 1; }
.status { display: flex; height: 16px; align-items: center; border-top: 1px solid #555; background: linear-gradient(#707070, #8a8a8a); }
.status output { width: 127px; padding-left: 8px; white-space: nowrap; font: 8px/15px "Liberation Sans", sans-serif; color: #111; }
.modes { width: 216px; height: 15px; display: grid; grid-template-columns: repeat(15, 1fr); }
.modes button { display: grid; place-items: center; min-width: 0; background: #a6a6a6; border: 1px solid #777; }
.modes svg { width: 11px; height: 11px; }
.modes .on { background: linear-gradient(#d9eff7, #90c9df); }
.modes .lit { background: #ddd; }

.brand { position: absolute; right: 0; bottom: 0; z-index: 3; display: flex; align-items: center; width: 355px; height: 178px; padding: 0 0 2px 32px; background: #fdfefd; }
.brand svg { width: 97px; height: 80px; stroke: none; flex: none; }
.brand div { display: flex; flex-direction: column; white-space: nowrap; font-family: "Noto Sans CJK SC", sans-serif; color: #0c0c0c; }
.brand strong { font-size: 38px; line-height: 42px; font-weight: 900; font-style: italic; }
.brand span { font-family: "Open Sans", sans-serif; font-size: 24px; line-height: 24px; font-weight: 500; font-style: italic; }
```
